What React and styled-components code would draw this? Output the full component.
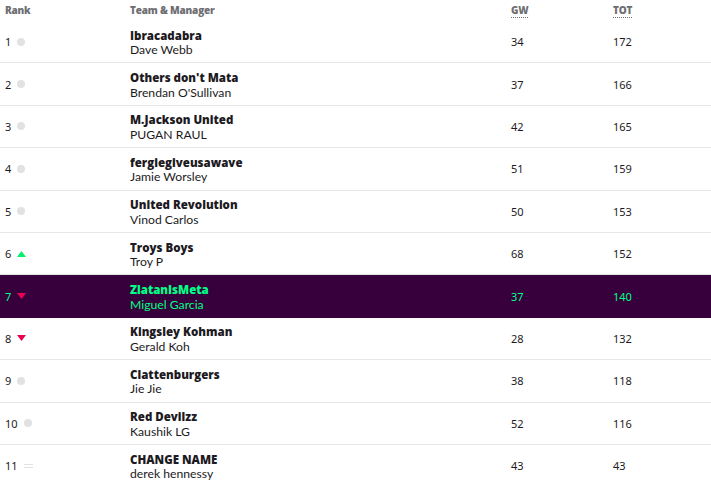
import React from 'react';
import styled, { createGlobalStyle } from 'styled-components';

const GlobalStyle = createGlobalStyle`
    body {
        margin: 0;
        background: #fff;
        font-family: Lato, "Noto Sans", sans-serif;
        color: #37003c;
    }
`;

const ROWS = [
    { rank: 1, move: 'same', team: 'Ibracadabra', manager: 'Dave Webb', gw: 34, tot: 172 },
    { rank: 2, move: 'same', team: "Others don't Mata", manager: "Brendan O'Sullivan", gw: 37, tot: 166 },
    { rank: 3, move: 'same', team: 'M.Jackson United', manager: 'PUGAN RAUL', gw: 42, tot: 165 },
    { rank: 4, move: 'same', team: 'fergiegiveusawave', manager: 'Jamie Worsley', gw: 51, tot: 159 },
    { rank: 5, move: 'same', team: 'United Revolution', manager: 'Vinod Carlos', gw: 50, tot: 153 },
    { rank: 6, move: 'up', team: 'Troys Boys', manager: 'Troy P', gw: 68, tot: 152 },
    { rank: 7, move: 'down', team: 'ZlatanIsMeta', manager: 'Miguel Garcia', gw: 37, tot: 140, mine: true },
    { rank: 8, move: 'down', team: 'Kingsley Kohman', manager: 'Gerald Koh', gw: 28, tot: 132 },
    { rank: 9, move: 'same', team: 'Clattenburgers', manager: 'Jie Jie', gw: 38, tot: 118 },
    { rank: 10, move: 'same', team: 'Red Devilzz', manager: 'Kaushik LG', gw: 52, tot: 116 },
    { rank: 11, move: 'new', team: 'CHANGE NAME', manager: 'derek hennessy', gw: 43, tot: 43 },
];

const Table = styled.div`
    width: 711px;
`;

const Row = styled.div`
    display: grid;
    grid-template-columns: 130px 381px 102px 1fr;
    align-items: center;
    height: 42.4px;
    box-sizing: border-box;
    border-bottom: 1px solid ${p => (p.$mine ? '#37003c' : '#e6e6e6')};
    background: ${p => (p.$mine ? '#37003c' : 'transparent')};
    color: ${p => (p.$mine ? '#00ff85' : '#1d1a22')};
`;

const HeadRow = styled(Row)`
    height: 21px;
    border-bottom: none;
    align-items: start;
    padding-top: 3px;
`;

const HeadCell = styled.div`
    font-family: "Open Sans", sans-serif;
    font-weight: 800;
    font-size: 10px;
    color: #6e6e72;
    letter-spacing: -0.2px;
    padding-left: ${p => p.$pad || 0}px;
`;

const Abbr = styled.span`
    border-bottom: 1px dotted #6e6e72;
`;

const RankCell = styled.div`
    display: flex;
    align-items: center;
    gap: 6px;
    padding-left: 5px;
    font-family: "Noto Sans", sans-serif;
    font-size: 11px;
`;

const Num = styled.div`
    font-family: "Noto Sans", sans-serif;
    font-size: 11px;
`;

const TeamCell = styled.div`
    display: flex;
    flex-direction: column;
    line-height: 14.5px;
    padding-top: 3px;
`;

const TeamName = styled.span`
    font-family: "Open Sans", sans-serif;
    font-weight: 800;
    font-size: 11.5px;
`;

const Manager = styled.span`
    font-family: Lato, sans-serif;
    font-size: 12.2px;
`;

const Dot = styled.span`
    width: 8px;
    height: 8px;
    border-radius: 50%;
    background: #e2e2e2;
`;

const Equal = styled.span`
    width: 9px;
    height: 4px;
    border-top: 1px solid #e2e2e2;
    border-bottom: 1px solid #e2e2e2;
    box-sizing: border-box;
`;

const Arrow = ({ dir }) => (
    <svg width="9" height="6" viewBox="0 0 9 6">
        {dir === 'up'
            ? <polygon points="4.5,0 9,6 0,6" fill="#05f06e" />
            : <polygon points="0,0 9,0 4.5,6" fill="#e90052" />}
    </svg>
);

const Movement = ({ move }) => {
    if (move === 'up' || move === 'down') return <Arrow dir={move} />;
    if (move === 'new') return <Equal />;
    return <Dot />;
};

const App = () => (
    <Table>
        <GlobalStyle />
        <HeadRow>
            <HeadCell $pad={5}>Rank</HeadCell>
            <HeadCell>Team &amp; Manager</HeadCell>
            <HeadCell><Abbr>GW</Abbr></HeadCell>
            <HeadCell><Abbr>TOT</Abbr></HeadCell>
        </HeadRow>
        {ROWS.map(r => (
            <Row key={r.rank} $mine={r.mine}>
                <RankCell>
                    {r.rank}
                    <Movement move={r.move} />
                </RankCell>
                <TeamCell>
                    <TeamName>{r.team}</TeamName>
                    <Manager>{r.manager}</Manager>
                </TeamCell>
                <Num>{r.gw}</Num>
                <Num>{r.tot}</Num>
            </Row>
        ))}
    </Table>
);

export default App;
